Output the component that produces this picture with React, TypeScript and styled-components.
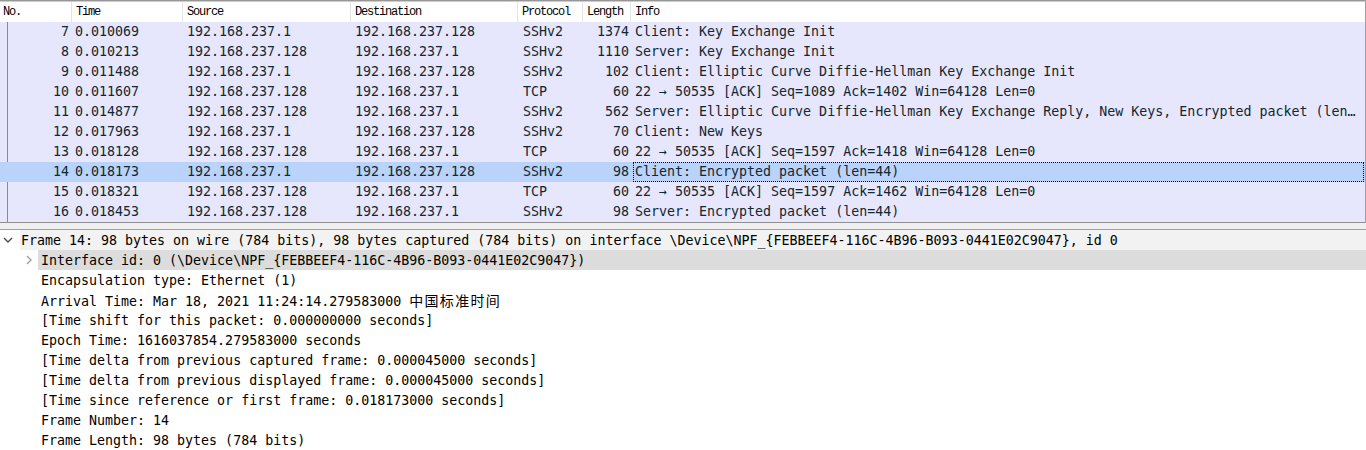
import React from 'react'
import styled, { createGlobalStyle } from 'styled-components'

type Packet = {
  no: number
  time: string
  source: string
  destination: string
  protocol: string
  length: number
  info: string
}

type Tone = 'hover' | 'selected'

type TreeItem = {
  level: number
  text: string
  suffix?: string
  expander?: 'open' | 'closed'
  tone?: Tone
}

const LOCAL = '192.168.237.1'
const REMOTE = '192.168.237.128'
const SELECTED_NO = 14

const packets: Packet[] = [
  { no: 7, time: '0.010069', source: LOCAL, destination: REMOTE, protocol: 'SSHv2', length: 1374, info: 'Client: Key Exchange Init' },
  { no: 8, time: '0.010213', source: REMOTE, destination: LOCAL, protocol: 'SSHv2', length: 1110, info: 'Server: Key Exchange Init' },
  { no: 9, time: '0.011488', source: LOCAL, destination: REMOTE, protocol: 'SSHv2', length: 102, info: 'Client: Elliptic Curve Diffie-Hellman Key Exchange Init' },
  { no: 10, time: '0.011607', source: REMOTE, destination: LOCAL, protocol: 'TCP', length: 60, info: '22 → 50535 [ACK] Seq=1089 Ack=1402 Win=64128 Len=0' },
  { no: 11, time: '0.014877', source: REMOTE, destination: LOCAL, protocol: 'SSHv2', length: 562, info: 'Server: Elliptic Curve Diffie-Hellman Key Exchange Reply, New Keys, Encrypted packet (len…' },
  { no: 12, time: '0.017963', source: LOCAL, destination: REMOTE, protocol: 'SSHv2', length: 70, info: 'Client: New Keys' },
  { no: 13, time: '0.018128', source: REMOTE, destination: LOCAL, protocol: 'TCP', length: 60, info: '22 → 50535 [ACK] Seq=1597 Ack=1418 Win=64128 Len=0' },
  { no: 14, time: '0.018173', source: LOCAL, destination: REMOTE, protocol: 'SSHv2', length: 98, info: 'Client: Encrypted packet (len=44)' },
  { no: 15, time: '0.018321', source: REMOTE, destination: LOCAL, protocol: 'TCP', length: 60, info: '22 → 50535 [ACK] Seq=1597 Ack=1462 Win=64128 Len=0' },
  { no: 16, time: '0.018453', source: REMOTE, destination: LOCAL, protocol: 'SSHv2', length: 98, info: 'Server: Encrypted packet (len=44)' },
]

const treeItems: TreeItem[] = [
  {
    level: 0,
    expander: 'open',
    tone: 'hover',
    text: 'Frame 14: 98 bytes on wire (784 bits), 98 bytes captured (784 bits) on interface \\Device\\NPF_{FEBBEEF4-116C-4B96-B093-0441E02C9047}, id 0',
  },
  { level: 1, expander: 'closed', tone: 'selected', text: 'Interface id: 0 (\\Device\\NPF_{FEBBEEF4-116C-4B96-B093-0441E02C9047})' },
  { level: 1, text: 'Encapsulation type: Ethernet (1)' },
  { level: 1, text: 'Arrival Time: Mar 18, 2021 11:24:14.279583000 ', suffix: '中国标准时间' },
  { level: 1, text: '[Time shift for this packet: 0.000000000 seconds]' },
  { level: 1, text: 'Epoch Time: 1616037854.279583000 seconds' },
  { level: 1, text: '[Time delta from previous captured frame: 0.000045000 seconds]' },
  { level: 1, text: '[Time delta from previous displayed frame: 0.000045000 seconds]' },
  { level: 1, text: '[Time since reference or first frame: 0.018173000 seconds]' },
  { level: 1, text: 'Frame Number: 14' },
  { level: 1, text: 'Frame Length: 98 bytes (784 bits)' },
]

const columns = ['No.', 'Time', 'Source', 'Destination', 'Protocol', 'Length', 'Info']

const GlobalStyle = createGlobalStyle`
  html, body {
    margin: 0;
    padding: 0;
    background: #ffffff;
  }
  body {
    width: 1366px;
    height: 450px;
    overflow: hidden;
  }
`
const Window = styled.div`
  width: 1366px;
  height: 450px;
  display: flex;
  flex-direction: column;
  background: #ffffff;
  font-family: 'DejaVu Sans Mono', 'Noto Sans CJK SC', monospace;
  font-size: 13.3px;
`
const PacketList = styled.div`
  display: flex;
  flex-direction: column;
  border-top: 1px solid #979797;
  border-right: 1px solid #a0a0a0;
  border-bottom: 1px solid #8f8f8f;
`
const grid = `
  display: grid;
  grid-template-columns: 72px 111px 168px 167px 65px 48px 1fr;
  height: 20px;
`
const HeaderRow = styled.div`
  ${grid}
  border-top: 1px solid #cdcdcd;
  background: #ffffff;
`
const HeaderCell = styled.div<{ $first?: boolean }>`
  padding-left: ${(p) => (p.$first ? 3 : 4)}px;
  border-right: 1px solid #e3e3e3;
  font-family: 'Liberation Mono', monospace;
  font-size: 12px;
  letter-spacing: -1.2px;
  line-height: 20px;
  color: #000000;
  white-space: nowrap;
  overflow: hidden;
  &:last-child {
    border-right: none;
  }
`
const PacketRow = styled.div<{ $selected?: boolean }>`
  ${grid}
  background: ${(p) => (p.$selected ? '#b9d3fb' : '#e6e6fd')};
  color: #12272e;
  line-height: 20px;
  white-space: nowrap;
`
const Cell = styled.div<{ $pad: number }>`
  padding-left: ${(p) => p.$pad}px;
  overflow: hidden;
`
const NumberCell = styled.div<{ $selected?: boolean }>`
  position: relative;
  text-align: right;
  padding-right: 3px;
  &::before {
    content: '';
    display: ${(p) => (p.$selected ? 'none' : 'block')};
    position: absolute;
    left: 7px;
    top: 0;
    bottom: 0;
    width: 1px;
    background: #8a8a8a;
  }
`
const LengthCell = styled.div`
  text-align: right;
  padding-right: 2px;
`
const InfoCell = styled.div<{ $focused?: boolean }>`
  box-sizing: border-box;
  height: 20px;
  margin: 0 1px 0 2px;
  padding-left: 1px;
  border: 1px ${(p) => (p.$focused ? 'dotted #000000' : 'solid transparent')};
  line-height: 18px;
  overflow: hidden;
`
const Splitter = styled.div`
  height: 6px;
  background: #f0f0f0;
  border-bottom: 1px solid #a0a0a0;
`
const DetailTree = styled.div`
  flex: 1;
  display: flex;
  flex-direction: column;
  color: #000000;
`
const TreeRow = styled.div`
  display: flex;
  height: 20px;
  white-space: nowrap;
`
const ExpanderSlot = styled.div<{ $level: number }>`
  width: ${(p) => (p.$level === 0 ? 20 : 38)}px;
  flex: none;
  display: flex;
  align-items: center;
  justify-content: flex-end;
  padding-right: ${(p) => (p.$level === 0 ? 7 : 6)}px;
  box-sizing: border-box;
`
const TreeLabel = styled.div<{ $level: number; $tone?: Tone }>`
  flex: 1;
  padding-top: 1px;
  line-height: 19px;
  padding-left: ${(p) => (p.$level === 0 ? 1 : 3)}px;
  background: ${(p) => (p.$tone === 'selected' ? '#dcdcdc' : p.$tone === 'hover' ? '#f2f2f2' : 'transparent')};
`
const Cjk = styled.span`
  font-family: 'Noto Sans CJK SC', sans-serif;
  font-size: 14px;
  letter-spacing: 1.3px;
`

const Expander = ({ state }: { state: 'open' | 'closed' }) =>
  state === 'open' ? (
    <svg width='10' height='6' viewBox='0 0 10 6'>
      <polyline points='1,1 5,5 9,1' fill='none' stroke='#4a4a4a' strokeWidth='1.4' />
    </svg>
  ) : (
    <svg width='6' height='10' viewBox='0 0 6 10'>
      <polyline points='1,1 5,5 1,9' fill='none' stroke='#a0a0a0' strokeWidth='1.4' />
    </svg>
  )

export default function App() {
  return (
    <>
      <GlobalStyle />
      <Window>
        <PacketList>
          <HeaderRow>
            {columns.map((title, index) => (
              <HeaderCell key={title} $first={index === 0}>
                {title}
              </HeaderCell>
            ))}
          </HeaderRow>
          {packets.map((packet) => {
            const selected = packet.no === SELECTED_NO
            return (
              <PacketRow key={packet.no} $selected={selected}>
                <NumberCell $selected={selected}>{packet.no}</NumberCell>
                <Cell $pad={3}>{packet.time}</Cell>
                <Cell $pad={4}>{packet.source}</Cell>
                <Cell $pad={4}>{packet.destination}</Cell>
                <Cell $pad={5}>{packet.protocol}</Cell>
                <LengthCell>{packet.length}</LengthCell>
                <InfoCell $focused={selected}>{packet.info}</InfoCell>
              </PacketRow>
            )
          })}
        </PacketList>
        <Splitter />
        <DetailTree>
          {treeItems.map((item, index) => (
            <TreeRow key={index}>
              <ExpanderSlot $level={item.level}>
                {item.expander && <Expander state={item.expander} />}
              </ExpanderSlot>
              <TreeLabel $level={item.level} $tone={item.tone}>
                {item.text}
                {item.suffix && <Cjk>{item.suffix}</Cjk>}
              </TreeLabel>
            </TreeRow>
          ))}
        </DetailTree>
      </Window>
    </>
  )
}
